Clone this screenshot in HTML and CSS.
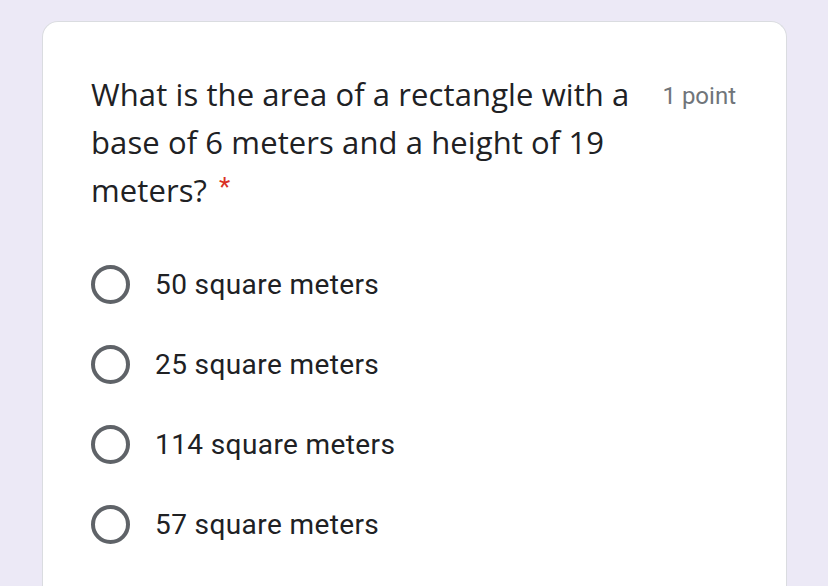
FILE: index.html
```html
<!DOCTYPE html>
<html>
<head>
<meta charset="utf-8">
<link rel="stylesheet" href="styles.css">
</head>
<body>
<div class="card">
  <div class="header">
    <div class="question"><span class="qtext">What is the area of a rectangle with a base of 6 meters and a height of 19 meters?</span><span class="req">*</span></div>
    <div class="points">1 point</div>
  </div>
  <div class="options">
    <div class="option"><span class="radio"></span><span class="label">50 square meters</span></div>
    <div class="option"><span class="radio"></span><span class="label">25 square meters</span></div>
    <div class="option"><span class="radio"></span><span class="label">114 square meters</span></div>
    <div class="option"><span class="radio"></span><span class="label">57 square meters</span></div>
  </div>
</div>
</body>
</html>
```
FILE: styles.css
```css
html, body {
  margin: 0;
  padding: 0;
  background: #ece9f6;
  height: 100%;
  overflow: hidden;
}
.card {
  margin: 21px 0 0 42px;
  width: 745px;
  height: 565px;
  background: #fff;
  border: 1px solid #dadce0;
  border-bottom: none;
  border-radius: 16px 16px 0 0;
  padding: 48px 50px 0 48px;
  box-sizing: border-box;
}
.header {
  display: flex;
  align-items: flex-start;
}
.question {
  flex: 1;
  font-family: "Open Sans", sans-serif;
  font-size: 31px;
  letter-spacing: 0.1px;
  line-height: 48px;
  color: #202124;
  padding-right: 24px;
}
.req {
  color: #d93025;
  font-family: Roboto, sans-serif;
  font-size: 26px;
  vertical-align: top;
  line-height: 42px;
  margin-left: 12px;
}
.points {
  font-family: Roboto, sans-serif;
  font-size: 24px;
  line-height: 48px;
  color: #70757a;
  white-space: nowrap;
  padding-top: 2px;
}
.options {
  margin-top: 30px;
  display: flex;
  flex-direction: column;
}
.option {
  display: flex;
  align-items: center;
  height: 80px;
}
.radio {
  width: 39px;
  height: 39px;
  box-sizing: border-box;
  border: 4px solid #5f6368;
  border-radius: 50%;
  flex: none;
}
.label {
  margin-left: 25px;
  font-family: Roboto, sans-serif;
  font-size: 28px;
  letter-spacing: 0.4px;
  color: #202124;
}
```
